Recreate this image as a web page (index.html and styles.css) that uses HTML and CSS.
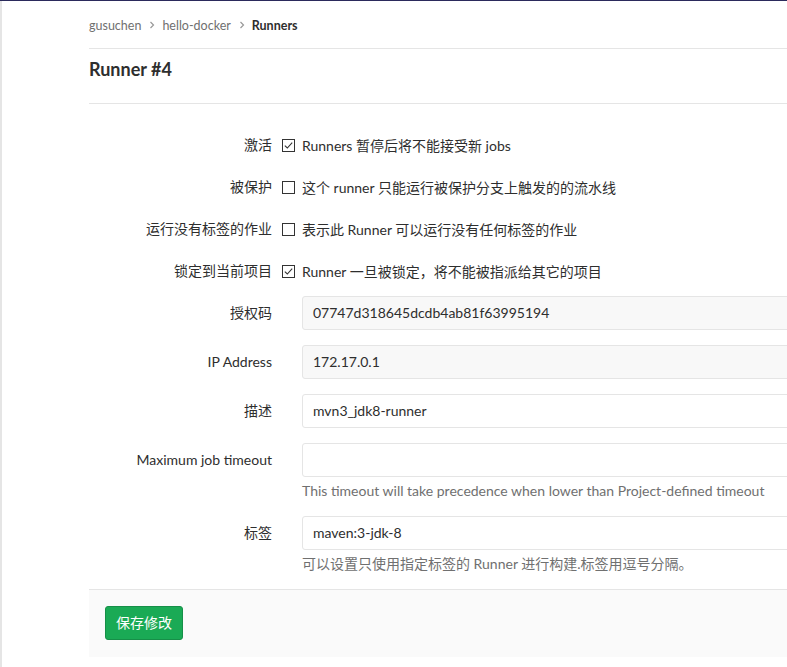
FILE: index.html
```html
<!DOCTYPE html>
<html lang="zh">
<head>
<meta charset="utf-8">
<title>Runner #4</title>
<link rel="stylesheet" href="styles.css">
</head>
<body>
<div class="topbar"></div>
<div class="layout">
  <div class="sidebar"></div>
  <main class="content">
    <nav class="breadcrumbs">
      <a class="crumb">gusuchen</a>
      <svg class="chev" width="8" height="8" viewBox="0 0 8 8"><path d="M2.5 1 L5.5 4 L2.5 7" fill="none" stroke="#999" stroke-width="1.2"/></svg>
      <a class="crumb">hello-docker</a>
      <svg class="chev" width="8" height="8" viewBox="0 0 8 8"><path d="M2.5 1 L5.5 4 L2.5 7" fill="none" stroke="#999" stroke-width="1.2"/></svg>
      <span class="crumb current">Runners</span>
    </nav>
    <h3 class="page-title">Runner #4</h3>
    <form class="runner-form">
      <div class="row check-row">
        <label class="label">激活</label>
        <div class="control check">
          <span class="box"><svg width="13" height="13" viewBox="0 0 13 13"><rect x="0.5" y="0.5" width="12" height="12" fill="#fff" stroke="#333"/><path d="M2.8 6.6 L5.3 9 L10.2 3.6" fill="none" stroke="#333" stroke-width="1.1"/></svg></span>
          <span>Runners 暂停后将不能接受新 jobs</span>
        </div>
      </div>
      <div class="row check-row">
        <label class="label">被保护</label>
        <div class="control check">
          <span class="box"><svg width="13" height="13" viewBox="0 0 13 13"><rect x="0.5" y="0.5" width="12" height="12" fill="#fff" stroke="#333"/></svg></span>
          <span>这个 runner 只能运行被保护分支上触发的的流水线</span>
        </div>
      </div>
      <div class="row check-row">
        <label class="label">运行没有标签的作业</label>
        <div class="control check">
          <span class="box"><svg width="13" height="13" viewBox="0 0 13 13"><rect x="0.5" y="0.5" width="12" height="12" fill="#fff" stroke="#333"/></svg></span>
          <span>表示此 Runner 可以运行没有任何标签的作业</span>
        </div>
      </div>
      <div class="row check-row last-check">
        <label class="label">锁定到当前项目</label>
        <div class="control check">
          <span class="box"><svg width="13" height="13" viewBox="0 0 13 13"><rect x="0.5" y="0.5" width="12" height="12" fill="#fff" stroke="#333"/><path d="M2.8 6.6 L5.3 9 L10.2 3.6" fill="none" stroke="#333" stroke-width="1.1"/></svg></span>
          <span>Runner 一旦被锁定，将不能被指派给其它的项目</span>
        </div>
      </div>
      <div class="row input-row">
        <label class="label">授权码</label>
        <div class="control field">
          <div class="input readonly">07747d318645dcdb4ab81f63995194</div>
        </div>
      </div>
      <div class="row input-row">
        <label class="label">IP Address</label>
        <div class="control field">
          <div class="input readonly">172.17.0.1</div>
        </div>
      </div>
      <div class="row input-row">
        <label class="label">描述</label>
        <div class="control field">
          <div class="input">mvn3_jdk8-runner</div>
        </div>
      </div>
      <div class="row input-row">
        <label class="label">Maximum job timeout</label>
        <div class="control field">
          <div class="input"></div>
          <p class="help">This timeout will take precedence when lower than Project-defined timeout</p>
        </div>
      </div>
      <div class="row input-row">
        <label class="label">标签</label>
        <div class="control field">
          <div class="input">maven:3-jdk-8</div>
          <p class="help">可以设置只使用指定标签的 Runner 进行构建.标签用逗号分隔。</p>
        </div>
      </div>
      <div class="form-actions">
        <button type="button" class="btn-save">保存修改</button>
      </div>
    </form>
  </main>
</div>
</body>
</html>
```

FILE: styles.css
```css
html, body {
  margin: 0;
  padding: 0;
  overflow: hidden;
  background: #fff;
}
body {
  font-family: "Lato", "Noto Sans CJK SC", sans-serif;
  font-size: 14px;
  color: #2e2e2e;
  width: 787px;
  height: 667px;
}
.topbar {
  height: 1px;
  background: #2b2a5c;
}
.layout {
  display: flex;
  height: 666px;
}
.sidebar {
  width: 2px;
  flex: 0 0 2px;
  background: #e5e5e5;
}
.content {
  flex: 0 0 900px;
  width: 900px;
  padding-left: 87px;
}
.breadcrumbs {
  display: flex;
  align-items: center;
  border-bottom: 1px solid #e5e5e5;
  font-size: 12.5px;
  box-sizing: border-box;
  height: 48px;
  padding-top: 1px;
}
.crumb {
  color: #707070;
  text-decoration: none;
}
.crumb.current {
  color: #2e2e2e;
  font-weight: 700;
}
.chev {
  margin: 0 6px 0 7px;
}
.page-title {
  margin: 0;
  font-size: 18px;
  font-weight: 700;
  line-height: 24px;
  padding: 8px 0 22px;
  border-bottom: 1px solid #e5e5e5;
}
.runner-form {
  padding-top: 27px;
}
.row {
  display: grid;
  grid-template-columns: 183px 1fr;
  column-gap: 10px;
}
.label {
  text-align: right;
  line-height: 20px;
}
.check-row {
  height: 28px;
  margin-bottom: 14px;
  align-items: center;
}
.check-row .label {
  line-height: 28px;
}
.last-check {
  margin-bottom: 11px;
}
.check {
  display: flex;
  align-items: center;
  gap: 7px;
}
.box {
  display: flex;
  width: 13px;
  height: 13px;
}
.input-row {
  margin-bottom: 15px;
}
.input-row .label {
  line-height: 34px;
}
.field {
  padding-left: 20px;
}
.input {
  box-sizing: border-box;
  height: 34px;
  border: 1px solid #e5e5e5;
  border-radius: 3px;
  padding: 0 10px;
  line-height: 32px;
  background: #fff;
  color: #2e2e2e;
  width: 700px;
}
.input.readonly {
  background: #f8f8f8;
}
.help {
  margin: 4px 0 0;
  color: #707070;
  line-height: 20px;
}
.form-actions {
  margin-top: 12px;
  border-top: 1px solid #e5e5e5;
  background: #fafafa;
  padding: 16px 16px 17px;
}
.btn-save {
  font-family: "Lato", "Noto Sans CJK SC", sans-serif;
  font-size: 14px;
  color: #fff;
  background: #1aaa55;
  border: 1px solid #168f48;
  border-radius: 3px;
  height: 34px;
  padding: 0 10px;
  line-height: 32px;
}
```
